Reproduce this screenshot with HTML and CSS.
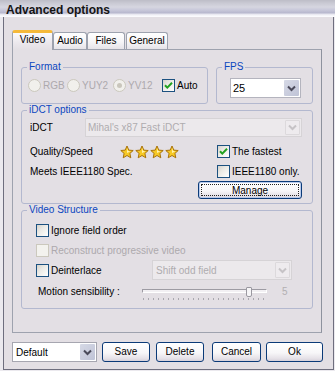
FILE: index.html
```html
<!DOCTYPE html>
<html>
<head>
<meta charset="utf-8">
<title>Advanced options</title>
<link rel="stylesheet" href="styles.css">
</head>
<body>
<div class="window">
  <div class="titlebar"><span class="title">Advanced options</span></div>
  <div class="client">
    <div class="tabs">
      <div class="tab active t-video">Video</div>
      <div class="tab t-audio">Audio</div>
      <div class="tab t-files">Files</div>
      <div class="tab t-general">General</div>
    </div>
    <div class="panel">
      <div class="row-top">
        <fieldset class="group g-format">
          <legend>Format</legend>
          <div class="fmt-body">
            <label class="opt dis o-rgb"><span class="radio"></span>RGB</label>
            <label class="opt dis o-yuy2"><span class="radio"></span>YUY2</label>
            <label class="opt dis o-yv12"><span class="radio on"></span>YV12</label>
            <label class="opt o-auto"><span class="check"><svg class="tick" width="11" height="11" viewBox="0 0 11 11"><path d="M2 5.2 L4.3 7.6 L9 2.8" fill="none" stroke="#21a121" stroke-width="2"/></svg></span>Auto</label>
          </div>
        </fieldset>
        <fieldset class="group g-fps">
          <legend>FPS</legend>
          <div class="fps-body">
            <div class="combo c-fps"><span class="ctext">25</span><span class="cbtn"><svg width="9" height="7" viewBox="0 0 9 7"><path d="M1 1.5 L4.5 5 L8 1.5" fill="none" stroke="#4a4a5a" stroke-width="2"/></svg></span></div>
          </div>
        </fieldset>
      </div>

      <fieldset class="group g-idct">
        <legend>iDCT options</legend>
        <div class="idct-body">
          <div class="idct-row">
            <span class="lbl-idct">iDCT</span>
            <div class="combo dis c-idct"><span class="ctext">Mihal's x87 Fast iDCT</span><span class="cbtn"><svg width="9" height="7" viewBox="0 0 9 7"><path d="M1 1.5 L4.5 5 L8 1.5" fill="none" stroke="#c6c3c6" stroke-width="2"/></svg></span></div>
          </div>
          <div class="qgrid">
            <div class="qcell">
              <span class="lbl-q">Quality/Speed</span>
              <span class="stars">
                <svg class="star" width="14" height="14" viewBox="0 0 14 14"><polygon points="7,1 8.8,5.1 13.2,5.5 9.9,8.4 10.8,12.8 7,10.5 3.2,12.8 4.1,8.4 0.8,5.5 5.2,5.1" fill="#f7c925" stroke="#a8720c" stroke-width="1"/><polygon points="7,3 8,5.9 10.5,6.2 7,8" fill="#fff3b0"/></svg>
                <svg class="star" width="14" height="14" viewBox="0 0 14 14"><polygon points="7,1 8.8,5.1 13.2,5.5 9.9,8.4 10.8,12.8 7,10.5 3.2,12.8 4.1,8.4 0.8,5.5 5.2,5.1" fill="#f7c925" stroke="#a8720c" stroke-width="1"/><polygon points="7,3 8,5.9 10.5,6.2 7,8" fill="#fff3b0"/></svg>
                <svg class="star" width="14" height="14" viewBox="0 0 14 14"><polygon points="7,1 8.8,5.1 13.2,5.5 9.9,8.4 10.8,12.8 7,10.5 3.2,12.8 4.1,8.4 0.8,5.5 5.2,5.1" fill="#f7c925" stroke="#a8720c" stroke-width="1"/><polygon points="7,3 8,5.9 10.5,6.2 7,8" fill="#fff3b0"/></svg>
                <svg class="star" width="14" height="14" viewBox="0 0 14 14"><polygon points="7,1 8.8,5.1 13.2,5.5 9.9,8.4 10.8,12.8 7,10.5 3.2,12.8 4.1,8.4 0.8,5.5 5.2,5.1" fill="#f7c925" stroke="#a8720c" stroke-width="1"/><polygon points="7,3 8,5.9 10.5,6.2 7,8" fill="#fff3b0"/></svg>
              </span>
            </div>
            <label class="opt"><span class="check"><svg class="tick" width="11" height="11" viewBox="0 0 11 11"><path d="M2 5.2 L4.3 7.6 L9 2.8" fill="none" stroke="#21a121" stroke-width="2"/></svg></span>The fastest</label>
            <div class="qcell">Meets IEEE1180 Spec.</div>
            <label class="opt"><span class="check"></span>IEEE1180 only.</label>
          </div>
          <div class="btnrow">
            <button class="btn btn-manage"><span class="focus">Manage</span></button>
          </div>
        </div>
      </fieldset>

      <fieldset class="group g-vs">
        <legend>Video Structure</legend>
        <div class="vs-body">
          <label class="opt vrow"><span class="check"></span>Ignore field order</label>
          <label class="opt dis vrow vrow2"><span class="check"></span>Reconstruct progressive video</label>
          <div class="vrow3">
            <label class="opt lbl-deint"><span class="check"></span>Deinterlace</label>
            <div class="combo dis c-deint"><span class="ctext">Shift odd field</span><span class="cbtn"><svg width="9" height="7" viewBox="0 0 9 7"><path d="M1 1.5 L4.5 5 L8 1.5" fill="none" stroke="#c6c3c6" stroke-width="2"/></svg></span></div>
          </div>
          <div class="vrow4">
            <span class="lbl-motion">Motion sensibility :</span>
            <div class="slider">
              <div class="track"></div>
              <div class="thumb"></div>
              <div class="ticks"></div>
            </div>
            <span class="sval">5</span>
          </div>
        </div>
      </fieldset>
    </div>

    <div class="bottom">
      <div class="combo c-default"><span class="ctext">Default</span><span class="cbtn"><svg width="9" height="7" viewBox="0 0 9 7"><path d="M1 1.5 L4.5 5 L8 1.5" fill="none" stroke="#4a4a5a" stroke-width="2"/></svg></span></div>
      <button class="btn b-save">Save</button>
      <button class="btn b-delete">Delete</button>
      <button class="btn b-cancel">Cancel</button>
      <button class="btn b-ok">Ok</button>
    </div>
  </div>
</div>
</body>
</html>
```

FILE: styles.css
```css
* { box-sizing: border-box; }
html, body { margin: 0; padding: 0; }
body {
  width: 335px;
  height: 371px;
  overflow: hidden;
  background: #ebe9ee;
  font-family: "Liberation Sans", Arial, sans-serif;
  font-size: 10px;
  color: #000;
}
.window {
  width: 335px;
  height: 371px;
  display: flex;
  flex-direction: column;
  background: #ebe9ee;
}
.titlebar {
  height: 17px;
  flex: none;
  background: linear-gradient(to bottom, #bdbdc7 0px, #c9c9d3 3px, #d6d6e0 7px, #c8c8da 10px, #b7b7cd 13px, #e4e4ee 14px, #fafafd 16px);
}
.title {
  display: block;
  padding: 4px 0 0 6px;
  line-height: 13px;
  font-size: 12px;
  font-weight: bold;
  color: #141414;
}
.client {
  flex: 1;
  margin: 0 1px 1px 3px;
  border: 1px solid #6e6e7e;
  border-top: none;
  background: #e3dfe4;
  padding: 13px 0 0 8px;
}

/* tabs */
.tabs {
  display: flex;
  align-items: flex-end;
  height: 20px;
  margin-bottom: -1px;
  position: relative;
  z-index: 1;
}
.tab {
  height: 17px;
  margin-bottom: 1px;
  border: 1px solid #9da2ae;
  border-bottom: none;
  border-radius: 3px 3px 0 0;
  background: linear-gradient(to bottom, #ffffff, #f6f5f7 55%, #e6e3e8);
  text-align: center;
  line-height: 16px;
  white-space: nowrap;
}
.tab.active {
  height: 20px;
  margin-bottom: 0;
  border-top: 3px solid #f5b93a;
  background: linear-gradient(to bottom, #fbfafc, #ebe7ec 60%, #e3dfe4);
  line-height: 14px;
}
.t-video { width: 41px; }
.t-audio { width: 34px; }
.t-files { width: 38px; }
.t-general { width: 42px; margin-left: 1px; }

.panel {
  width: 310px;
  height: 284px;
  border: 1px solid #9ea2ae;
  border-right-color: #8e929e;
  background: #e3dfe4;
  padding: 11px 8px 10px 8px;
  display: flex;
  flex-direction: column;
}

/* groups */
fieldset.group {
  margin: 0;
  padding: 0;
  border: 1px solid #b3b8cf;
  border-radius: 3px;
  min-width: 0;
}
fieldset.group legend {
  padding: 0 2px;
  margin-left: 5px;
  color: #0b46c0;
  font-size: 10px;
  line-height: 12px;
}
.row-top { display: flex; gap: 8px; height: 43px; flex: none; }
.g-format { width: 187px; height: 43px; }
.g-fps { width: 97px; height: 43px; }
.g-idct { height: 100px; margin-top: 7px; flex: none; }
.g-vs { height: 105px; margin-top: 6px; flex: none; }

/* options */
.opt {
  display: flex;
  align-items: center;
  white-space: nowrap;
}
.opt.dis { color: #ada9ad; }
.radio {
  width: 13px;
  height: 13px;
  border: 1px solid #cbc8bd;
  border-radius: 50%;
  background: #f1f0ec;
  margin-right: 2px;
  display: flex;
  align-items: center;
  justify-content: center;
  flex: none;
}
.radio.on::after {
  content: "";
  width: 5px;
  height: 5px;
  border-radius: 50%;
  background: #c9c6bc;
}
.check {
  width: 13px;
  height: 13px;
  border: 1px solid #1c5180;
  background: linear-gradient(135deg, #d4d2cc 0%, #ebeae5 40%, #ffffff 100%);
  margin-right: 2px;
  display: flex;
  align-items: center;
  justify-content: center;
  flex: none;
}
.opt.dis .check { border-color: #cbc8bd; background: #f3f2ee; }

.fmt-body {
  display: flex;
  align-items: center;
  height: 14px;
  margin: 5px 0 0 6px;
}
.o-rgb { width: 39px; }
.o-yuy2 { width: 46px; }
.o-yv12 { width: 49px; }

.fps-body { padding: 5px 0 0 13px; }

/* combos */
.combo {
  display: flex;
  align-items: stretch;
  background: #ffffff;
  border: 1px solid #b4b4be;
}
.ctext {
  flex: 1;
  padding-left: 2px;
  display: flex;
  align-items: center;
  white-space: nowrap;
  overflow: hidden;
}
.cbtn {
  width: 15px;
  flex: none;
  margin: 1px;
  background: linear-gradient(135deg, #d6d9e6, #bfc3d6);
  border-radius: 1px;
  display: flex;
  align-items: center;
  justify-content: center;
}
.combo.dis {
  background: #ece9ec;
  border-color: #d6d3d6;
  color: #afacaf;
}
.combo.dis .cbtn {
  background: #eeebee;
  border: 1px solid #dcd9dc;
}
.c-fps { width: 71px; height: 20px; }
.c-fps .ctext { font-size: 11px; }

/* idct */
.idct-body { padding: 2px 10px 0 8px; }
.idct-row { display: flex; align-items: center; height: 19px; }
.lbl-idct { width: 55px; flex: none; }
.c-idct { flex: 1; height: 19px; }
.qgrid {
  display: grid;
  grid-template-columns: 187px 1fr;
  grid-template-rows: 15px 15px;
  row-gap: 5px;
  margin-top: 7px;
}
.qcell { display: flex; align-items: center; white-space: nowrap; }
.lbl-q { width: 90px; flex: none; }
.stars { display: flex; gap: 1px; }
.star { display: block; }
.btnrow { display: flex; justify-content: flex-end; margin-top: 2px; }

/* buttons */
.btn {
  height: 20px;
  padding: 0;
  border: 1px solid #0b3a78;
  border-radius: 3px;
  background: linear-gradient(to bottom, #ffffff 0%, #f7f6f8 55%, #e6e2e8 85%, #d7d1da 100%);
  font-family: "Liberation Sans", Arial, sans-serif;
  font-size: 10px;
  color: #000;
  text-align: center;
  line-height: 18px;
}
.btn-manage {
  width: 104px;
  height: 18px;
  padding: 2px;
  box-shadow: inset 0 0 0 1px #b9cbec;
  line-height: 12px;
}
.focus {
  display: block;
  height: 100%;
  border: 1px dotted #222;
}

/* video structure */
.vs-body { padding: 7px 0 0 14px; }
.vrow { height: 14px; }
.vrow2 { margin-top: 6px; }
.vrow3 { display: flex; align-items: center; height: 20px; margin-top: 3px; }
.lbl-deint { width: 116px; flex: none; }
.c-deint { width: 140px; height: 20px; }
.c-deint .ctext { padding-left: 3px; }
.vrow4 { display: flex; align-items: flex-start; height: 18px; margin-top: 4px; }
.lbl-motion { width: 106px; padding-left: 2px; line-height: 16px; flex: none; }
.slider { position: relative; width: 125px; height: 18px; flex: none; }
.track {
  margin-top: 5px;
  height: 4px;
  border-top: 1px solid #9d9ba3;
  border-left: 1px solid #9d9ba3;
  border-bottom: 1px solid #ffffff;
  border-right: 1px solid #ffffff;
  background: #f2f0f3;
}
.thumb {
  position: absolute;
  left: 104px;
  top: 3px;
  width: 6px;
  height: 10px;
  border: 1px solid #9a98a0;
  border-radius: 1px 1px 2px 2px;
  background: #f6f5f7;
}
.ticks {
  margin-top: 5px;
  margin-left: 1px;
  height: 2px;
  width: 122px;
  background: repeating-linear-gradient(to right, #a9a7ae 0 1px, transparent 1px 5px);
}
.sval { margin-left: 15px; color: #b2afb2; line-height: 16px; }

/* bottom */
.bottom { display: flex; margin-top: 9px; height: 20px; }
.c-default { width: 85px; height: 20px; border-color: #a6a6b0; }
.c-default .ctext { padding-left: 3px; }
.b-save { width: 48px; margin-left: 5px; }
.b-delete { width: 48px; margin-left: 6px; }
.b-cancel { width: 49px; margin-left: 8px; }
.b-ok { width: 57px; margin-left: 5px; }
```
